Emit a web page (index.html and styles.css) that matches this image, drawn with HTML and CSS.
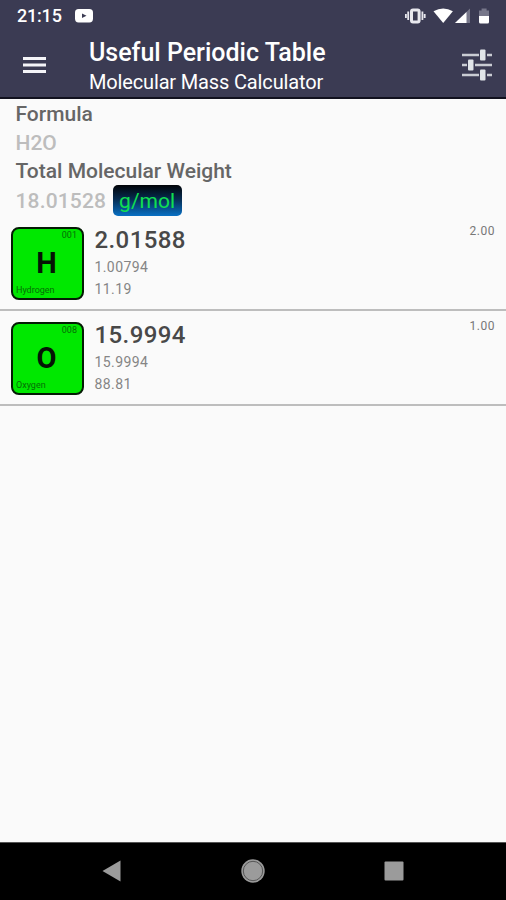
FILE: index.html
```html
<!DOCTYPE html>
<html lang="en">
<head>
<meta charset="utf-8">
<title>Useful Periodic Table</title>
<link rel="stylesheet" href="styles.css">
</head>
<body>
<div class="screen">
  <header class="header">
    <div class="status">
      <span class="clock">21:15</span>
      <svg class="video" width="18" height="14" viewBox="0 0 18 14"><rect width="18" height="13.4" rx="3.6" fill="#fff"/><path d="M7 4.500l4.500 2.300L7 9.100z" fill="#3b3b53"/></svg>
      <svg class="signals" width="88" height="20" viewBox="0 0 88 20">
        <g fill="none" stroke="#e8e8ee" stroke-width="1.800"><rect x="6.500" y="4" width="7.600" height="12" rx="1.500" stroke-width="3"/><path d="M3.200 5.500v8.500M17.400 5.500v8.500M.9 8v4M19.700 8v4"/></g>
        <path d="M28.500 5.200q9.700-5.600 19.400 0L38.200 17z" fill="#fff"/>
        <path d="M50 17L65 2.500V17z" fill="#77778a"/><path d="M50 17L61.500 5.900V17z" fill="#fff"/>
        <path d="M74 10V4.500h2.600V2.500h5v2H84V10z" fill="#77778a"/><path d="M74 10h10v6q0 1.500-1.500 1.500h-7Q74 17.500 74 16z" fill="#fff"/>
      </svg>
    </div>
    <div class="toolbar">
      <svg class="menu" width="24" height="18" viewBox="0 0 24 18"><path d="M0 2.500h23M0 9h23M0 15.500h23" stroke="#f4f4f8" stroke-width="2.800"/></svg>
      <div class="titles"><h1>Useful Periodic Table</h1><h2>Molecular Mass Calculator</h2></div>
      <svg class="tune" width="32" height="32" viewBox="0 0 32 32"><g fill="none" stroke="#c9ccd3"><path d="M1 6h17M26 6h5M1 16h5M14 16h17M1 26h17M26 26h5" stroke-width="2.600"/></g><g fill="#e0e4e8"><rect x="19" y=".5" width="5.500" height="11" rx="1"/><rect x="7" y="10.500" width="5.500" height="11" rx="1"/><rect x="19" y="20.500" width="5.500" height="11" rx="1"/></g></svg>
    </div>
  </header>
  <main class="content">
    <section class="summary">
      <div class="label">Formula</div>
      <div class="value">H2O</div>
      <div class="label">Total Molecular Weight</div>
      <div class="value weight"><span class="total">18.01528</span><span class="unit">g/mol</span></div>
    </section>
    <article class="row">
      <div class="tile"><span class="number">001</span><b>H</b><span class="name">Hydrogen</span></div>
      <div class="data"><strong>2.01588</strong><span>1.00794</span><span>11.19</span></div>
      <span class="count">2.00</span>
    </article>
    <article class="row">
      <div class="tile"><span class="number">008</span><b>O</b><span class="name">Oxygen</span></div>
      <div class="data"><strong>15.9994</strong><span>15.9994</span><span>88.81</span></div>
      <span class="count">1.00</span>
    </article>
  </main>
  <nav class="nav">
    <svg width="20" height="22" viewBox="0 0 20 22"><path d="M.500 11L18.500.500v21z" fill="#9b9b9b"/></svg>
    <svg width="24" height="24" viewBox="0 0 24 24"><circle cx="12" cy="12" r="11.700" fill="#9b9b9b"/><circle cx="12" cy="12" r="9.700" fill="none" stroke="#555"/></svg>
    <svg width="20" height="20" viewBox="0 0 20 20"><rect x=".500" y=".500" width="19" height="19" rx="1" fill="#9b9b9b"/></svg>
  </nav>
</div>
</body>
</html>
```
FILE: styles.css
```css
* { box-sizing: border-box; }
body { margin: 0; font-family: Roboto, "Liberation Sans", sans-serif; }
svg { display: block; flex: none; }
.screen { width: 506px; height: 900px; display: flex; flex-direction: column; background: #fafafa; overflow: hidden; }
.header { height: 99px; background: #3b3b53; border-bottom: 2px solid #11111e; color: #fff; }
.status { height: 32px; display: flex; align-items: center; padding: 0 13px 0 17px; }
.clock { font-size: 18px; font-weight: 500; width: 58px; letter-spacing: -.2px; line-height: 20px; }
.signals { margin-left: auto; }
.toolbar { height: 65px; display: flex; align-items: center; padding: 0 13px 0 23px; }
.titles { margin-left: 42px; flex: 1; white-space: nowrap; }
h1, h2 { margin: 0; }
h1 { font-size: 25px; line-height: 32px; font-weight: 500; margin-top: 4px; }
h2 { font-size: 20px; line-height: 26px; padding-bottom: 2px; font-weight: 400; letter-spacing: -.15px; }
.content { flex: 1; }
.summary { height: 117px; padding-left: 15.5px; font-size: 21px; font-weight: 500; white-space: nowrap; }
.label { color: #666; height: 29px; line-height: 31px; }
.value { color: #bdbdbd; height: 28px; line-height: 31px; }
.weight { display: flex; align-items: center; height: 31px; gap: 6.5px; }
.total { letter-spacing: .15px; line-height: 33px; padding-top: 2px; }
.unit { width: 69px; height: 31px; line-height: 33px; border-radius: 5px; text-align: center; font-weight: 400; color: #10e050; background: linear-gradient(#020408, #062b50 45%, #0870c4); }
.row { height: 95px; display: flex; align-items: flex-start; padding: 11px 11px 0; border-bottom: 2px solid #bdbdbd; }
.tile { width: 73px; height: 73px; border: 2px solid #041c04; border-radius: 8px; background: #00e800; display: grid; grid-template-rows: 13px 1fr 13px; padding: 0 5px 1px 3px; color: #066e06; font-size: 9px; line-height: 13px; }
.number { text-align: right; }
.tile b { color: #051405; font-size: 29px; font-weight: 700; line-height: 42px; text-align: center; }
.data { margin-left: 10.5px; display: flex; flex-direction: column; font-size: 14px; line-height: 22px; letter-spacing: .4px; color: #858585; }
.data strong { color: #484848; font-size: 24px; line-height: 26px; font-weight: 500; margin-bottom: 3px; letter-spacing: .4px; }
.count { margin-left: auto; font-size: 12px; line-height: 9px; letter-spacing: .5px; color: #777; }
.nav { height: 58px; border-top: 1px solid #555; background: #000; display: flex; align-items: center; justify-content: space-between; padding: 0 102px 2px 102px; }
```
